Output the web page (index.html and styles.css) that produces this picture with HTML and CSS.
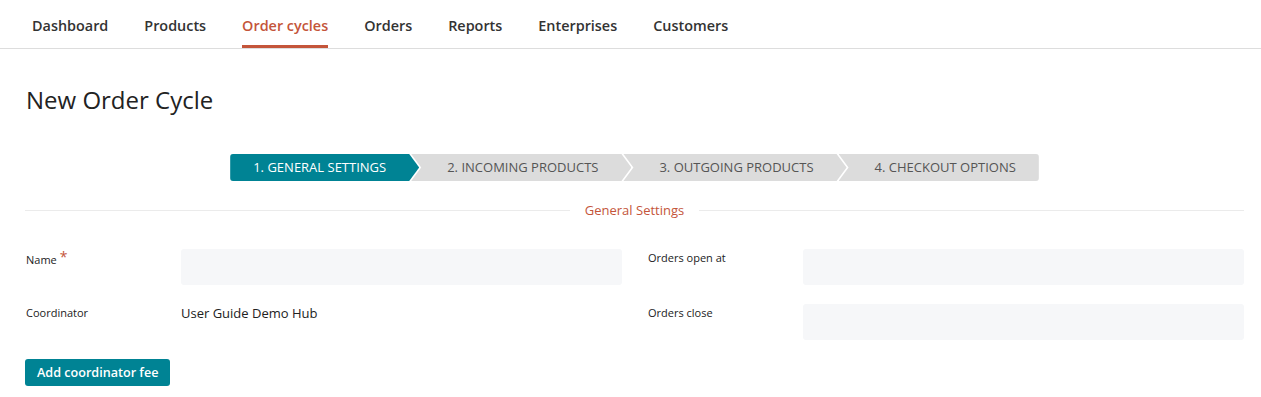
FILE: index.html
```html
<!DOCTYPE html>
<html>
<head>
<meta charset="utf-8">
<link rel="stylesheet" href="styles.css">
</head>
<body>
<nav class="topnav">
  <a class="nav-item">Dashboard</a>
  <a class="nav-item">Products</a>
  <a class="nav-item active">Order cycles</a>
  <a class="nav-item">Orders</a>
  <a class="nav-item">Reports</a>
  <a class="nav-item">Enterprises</a>
  <a class="nav-item">Customers</a>
</nav>
<main class="content">
  <h1 class="page-title">New Order Cycle</h1>
  <div class="steps">
    <div class="step first current">1. General Settings</div>
    <div class="step">2. Incoming Products</div>
    <div class="step">3. Outgoing Products</div>
    <div class="step last">4. Checkout Options</div>
  </div>
  <div class="divider"><span>General Settings</span></div>
  <div class="form-grid">
    <div class="field">
      <label class="field-label name-label">Name <span class="req">*</span></label>
      <div class="input"></div>
    </div>
    <div class="field">
      <label class="field-label">Orders open at</label>
      <div class="input"></div>
    </div>
    <div class="field">
      <label class="field-label">Coordinator</label>
      <div class="value">User Guide Demo Hub</div>
    </div>
    <div class="field">
      <label class="field-label">Orders close</label>
      <div class="input"></div>
    </div>
  </div>
  <button class="btn">Add coordinator fee</button>
</main>
</body>
</html>
```
FILE: styles.css
```css
* { box-sizing: border-box; }
body {
  margin: 0;
  font-family: "Open Sans", "Liberation Sans", sans-serif;
  color: #222;
  background: #fff;
}
.topnav {
  display: flex;
  gap: 36px;
  height: 49px;
  padding-left: 32px;
  border-bottom: 1px solid #ddd;
}
.nav-item {
  display: flex;
  align-items: center;
  font-size: 14.4px;
  font-weight: 600;
  color: #333;
  border-bottom: 3px solid transparent;
  padding-top: 6px;
}
.nav-item.active {
  color: #c4553a;
  border-bottom-color: #c4553a;
}
.content {
  padding: 0 17px 0 25px;
}
.page-title {
  margin: 36px 0 0 1px;
  font-size: 24px;
  font-weight: 500;
  line-height: 30px;
  color: #222;
}
.steps {
  display: flex;
  justify-content: center;
  margin-top: 39px;
}
.step {
  height: 27px;
  line-height: 27px;
  font-size: 13px;
  text-transform: uppercase;
  color: #555;
  background: #dcdcdc;
  padding: 0 33px 0 36px;
  margin-left: -8px;
  clip-path: polygon(0 0, calc(100% - 10px) 0, 100% 50%, calc(100% - 10px) 100%, 0 100%, 10px 50%);
}
.step.first {
  margin-left: 0;
  padding-left: 23px;
  border-radius: 3px 0 0 3px;
  clip-path: polygon(0 0, calc(100% - 10px) 0, 100% 50%, calc(100% - 10px) 100%, 0 100%);
}
.step.last {
  padding-right: 23px;
  border-radius: 0 3px 3px 0;
  clip-path: polygon(0 0, 100% 0, 100% 100%, 0 100%, 10px 50%);
}
.step.current {
  background: #008394;
  color: #fff;
}
.divider {
  position: relative;
  margin-top: 19px;
  height: 20px;
  display: flex;
  justify-content: center;
  align-items: center;
}
.divider::before {
  content: "";
  position: absolute;
  left: 0;
  right: 0;
  top: 50%;
  border-top: 1px solid #ebebeb;
}
.divider span {
  position: relative;
  background: #fff;
  padding: 0 15px;
  font-size: 13px;
  color: #c4553a;
}
.form-grid {
  display: grid;
  grid-template-columns: 1fr 1fr;
  column-gap: 25px;
  row-gap: 19px;
  margin-top: 29px;
}
.field {
  display: grid;
  grid-template-columns: 156px 1fr;
}
.field-label {
  font-size: 11px;
  padding-top: 1px;
  color: #222;
  padding-left: 1px;
  line-height: 15px;
}
.name-label {
  padding-top: 3px;
}
.req {
  color: #c4553a;
  font-size: 14px;
  line-height: 0;
  position: relative;
  top: -2px;
}
.input {
  height: 36px;
  background: #f6f7f9;
  border-radius: 3px;
}
.value {
  font-size: 13px;
  color: #222;
}
.btn {
  margin-top: 19px;
  height: 27px;
  padding: 0 12px;
  border: 0;
  border-radius: 3px;
  background: #008394;
  color: #fff;
  font-family: "Open Sans", "Liberation Sans", sans-serif;
  font-size: 12.6px;
  font-weight: 600;
}
```
